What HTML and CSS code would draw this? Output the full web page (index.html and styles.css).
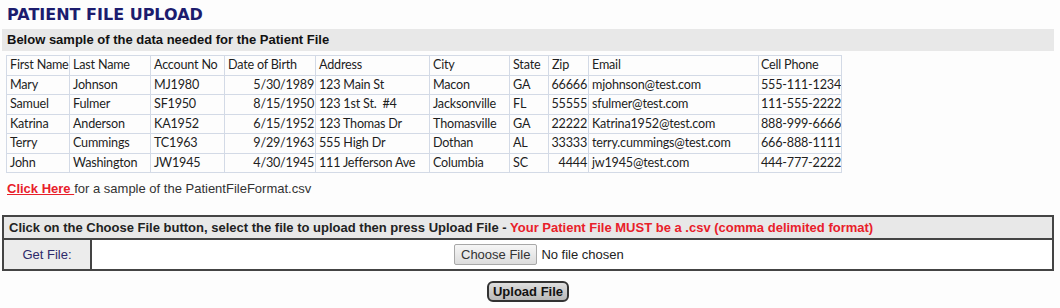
FILE: index.html
```html
<!DOCTYPE html>
<html lang="en">

<head>
    <meta charset="UTF-8">
    <title>Patient File Upload</title>
    <link rel="stylesheet" href="styles.css">
</head>

<body>
    <div class="page">
        <h1 class="page-title">PATIENT FILE UPLOAD</h1>
        <div class="section-bar">Below sample of the data needed for the Patient File</div>

        <table class="sample-table">
            <colgroup>
                <col style="width:63px">
                <col style="width:81px">
                <col style="width:74px">
                <col style="width:91px">
                <col style="width:114px">
                <col style="width:80px">
                <col style="width:39px">
                <col style="width:40px">
                <col style="width:170px">
                <col style="width:83px">
            </colgroup>
            <tr>
                <td>First Name</td>
                <td>Last Name</td>
                <td>Account No</td>
                <td>Date of Birth</td>
                <td>Address</td>
                <td>City</td>
                <td>State</td>
                <td>Zip</td>
                <td>Email</td>
                <td class="phone">Cell Phone</td>
            </tr>
            <tr>
                <td>Mary</td>
                <td>Johnson</td>
                <td>MJ1980</td>
                <td class="num">5/30/1989</td>
                <td>123 Main St</td>
                <td>Macon</td>
                <td>GA</td>
                <td class="num">66666</td>
                <td>mjohnson@test.com</td>
                <td class="phone">555-111-1234</td>
            </tr>
            <tr>
                <td>Samuel</td>
                <td>Fulmer</td>
                <td>SF1950</td>
                <td class="num">8/15/1950</td>
                <td>123 1st St.&nbsp; #4</td>
                <td>Jacksonville</td>
                <td>FL</td>
                <td class="num">55555</td>
                <td>sfulmer@test.com</td>
                <td class="phone">111-555-2222</td>
            </tr>
            <tr>
                <td>Katrina</td>
                <td>Anderson</td>
                <td>KA1952</td>
                <td class="num">6/15/1952</td>
                <td>123 Thomas Dr</td>
                <td>Thomasville</td>
                <td>GA</td>
                <td class="num">22222</td>
                <td>Katrina1952@test.com</td>
                <td class="phone">888-999-6666</td>
            </tr>
            <tr>
                <td>Terry</td>
                <td>Cummings</td>
                <td>TC1963</td>
                <td class="num">9/29/1963</td>
                <td>555 High Dr</td>
                <td>Dothan</td>
                <td>AL</td>
                <td class="num">33333</td>
                <td>terry.cummings@test.com</td>
                <td class="phone">666-888-1111</td>
            </tr>
            <tr>
                <td>John</td>
                <td>Washington</td>
                <td>JW1945</td>
                <td class="num">4/30/1945</td>
                <td>111 Jefferson Ave</td>
                <td>Columbia</td>
                <td>SC</td>
                <td class="num">4444</td>
                <td>jw1945@test.com</td>
                <td class="phone">444-777-2222</td>
            </tr>
        </table>

        <p class="sample-link"><a href="#">Click Here </a>for a sample of the PatientFileFormat.csv</p>

        <table class="upload-box">
            <tr>
                <th colspan="2">Click on the Choose File button, select the file to upload then press Upload File - <span class="warning">Your Patient File MUST be a .csv (comma delimited format)</span></th>
            </tr>
            <tr>
                <td class="upload-label">Get File:</td>
                <td class="upload-field"><input type="file" id="patient-file"></td>
            </tr>
        </table>

        <div class="actions">
            <button class="upload-btn">Upload File</button>
        </div>
    </div>
</body>

</html>
```

FILE: styles.css
```css
/* --- Base --- */
body {
    margin: 0;
    background: #fdfdfd;
    font-family: "Liberation Sans", Arial, sans-serif;
    font-size: 13px;
    color: #333;
}

.page {
    padding: 6px 6px 0 2px;
}

.page-title {
    margin: 0 0 5px 5px;
    font-family: "DejaVu Sans", Verdana, sans-serif;
    font-size: 16px;
    font-weight: bold;
    color: #1c1c6e;
    line-height: 18px;
}

.section-bar {
    background: #e8e8e8;
    height: 22px;
    line-height: 22px;
    padding-left: 5px;
    font-weight: bold;
    color: #111;
}

/* --- Sample data (spreadsheet look) --- */
.sample-table {
    border-collapse: collapse;
    table-layout: fixed;
    width: 835px;
    margin: 4px 0 0 4px;
    font-family: Lato, "Open Sans", sans-serif;
    font-size: 12.6px;
    letter-spacing: -0.2px;
    color: #1e1e1e;
}

.sample-table td {
    border: 1px solid #d3dae6;
    height: 18.5px;
    padding: 0 1px 0 3px;
    white-space: nowrap;
    overflow: hidden;
    line-height: 18px;
}

.sample-table td.num {
    text-align: right;
    padding-left: 0;
}

.sample-table td.phone {
    padding: 0 0 0 2px;
}

.sample-link {
    margin: 8px 0 0 5px;
    color: #333;
}

.sample-link a {
    color: #e8202a;
    font-weight: bold;
}

/* --- Upload box --- */
.upload-box {
    width: 100%;
    margin-top: 19px;
    border-collapse: collapse;
    border: 2px solid #444;
}

.upload-box th {
    background: #e8e8e8;
    text-align: left;
    padding: 3px 5px;
    height: 15px;
    color: #222;
    border-bottom: 2px solid #444;
}

.warning {
    color: #e8202a;
}

.upload-label {
    width: 86px;
    background: #ececec;
    text-align: center;
    color: #2e2a6a;
    border-right: 2px solid #444;
    height: 29px;
    padding: 0;
}

.upload-field {
    text-align: center;
    background: #fff;
    padding: 0;
}

.upload-field input {
    width: 236px;
    font-family: "Liberation Sans", Arial, sans-serif;
    font-size: 13px;
    color: #222;
}

.upload-field input::file-selector-button {
    font-family: "Liberation Sans", Arial, sans-serif;
    font-size: 13px;
    color: #333;
    background: linear-gradient(#f6f6f6, #dcdcdc);
    border: 1px solid #a8a8a8;
    border-radius: 2px;
    padding: 2px 6px;
    margin-right: 4px;
}

/* --- Actions --- */
.actions {
    text-align: center;
    margin-top: 10px;
}

.upload-btn {
    font-family: "Liberation Sans", Arial, sans-serif;
    font-size: 13px;
    font-weight: bold;
    color: #111;
    background: linear-gradient(#dedede, #b8b8b8);
    border: 2px solid #333;
    border-radius: 6px;
    padding: 1px 4px;
    cursor: pointer;
}
```
